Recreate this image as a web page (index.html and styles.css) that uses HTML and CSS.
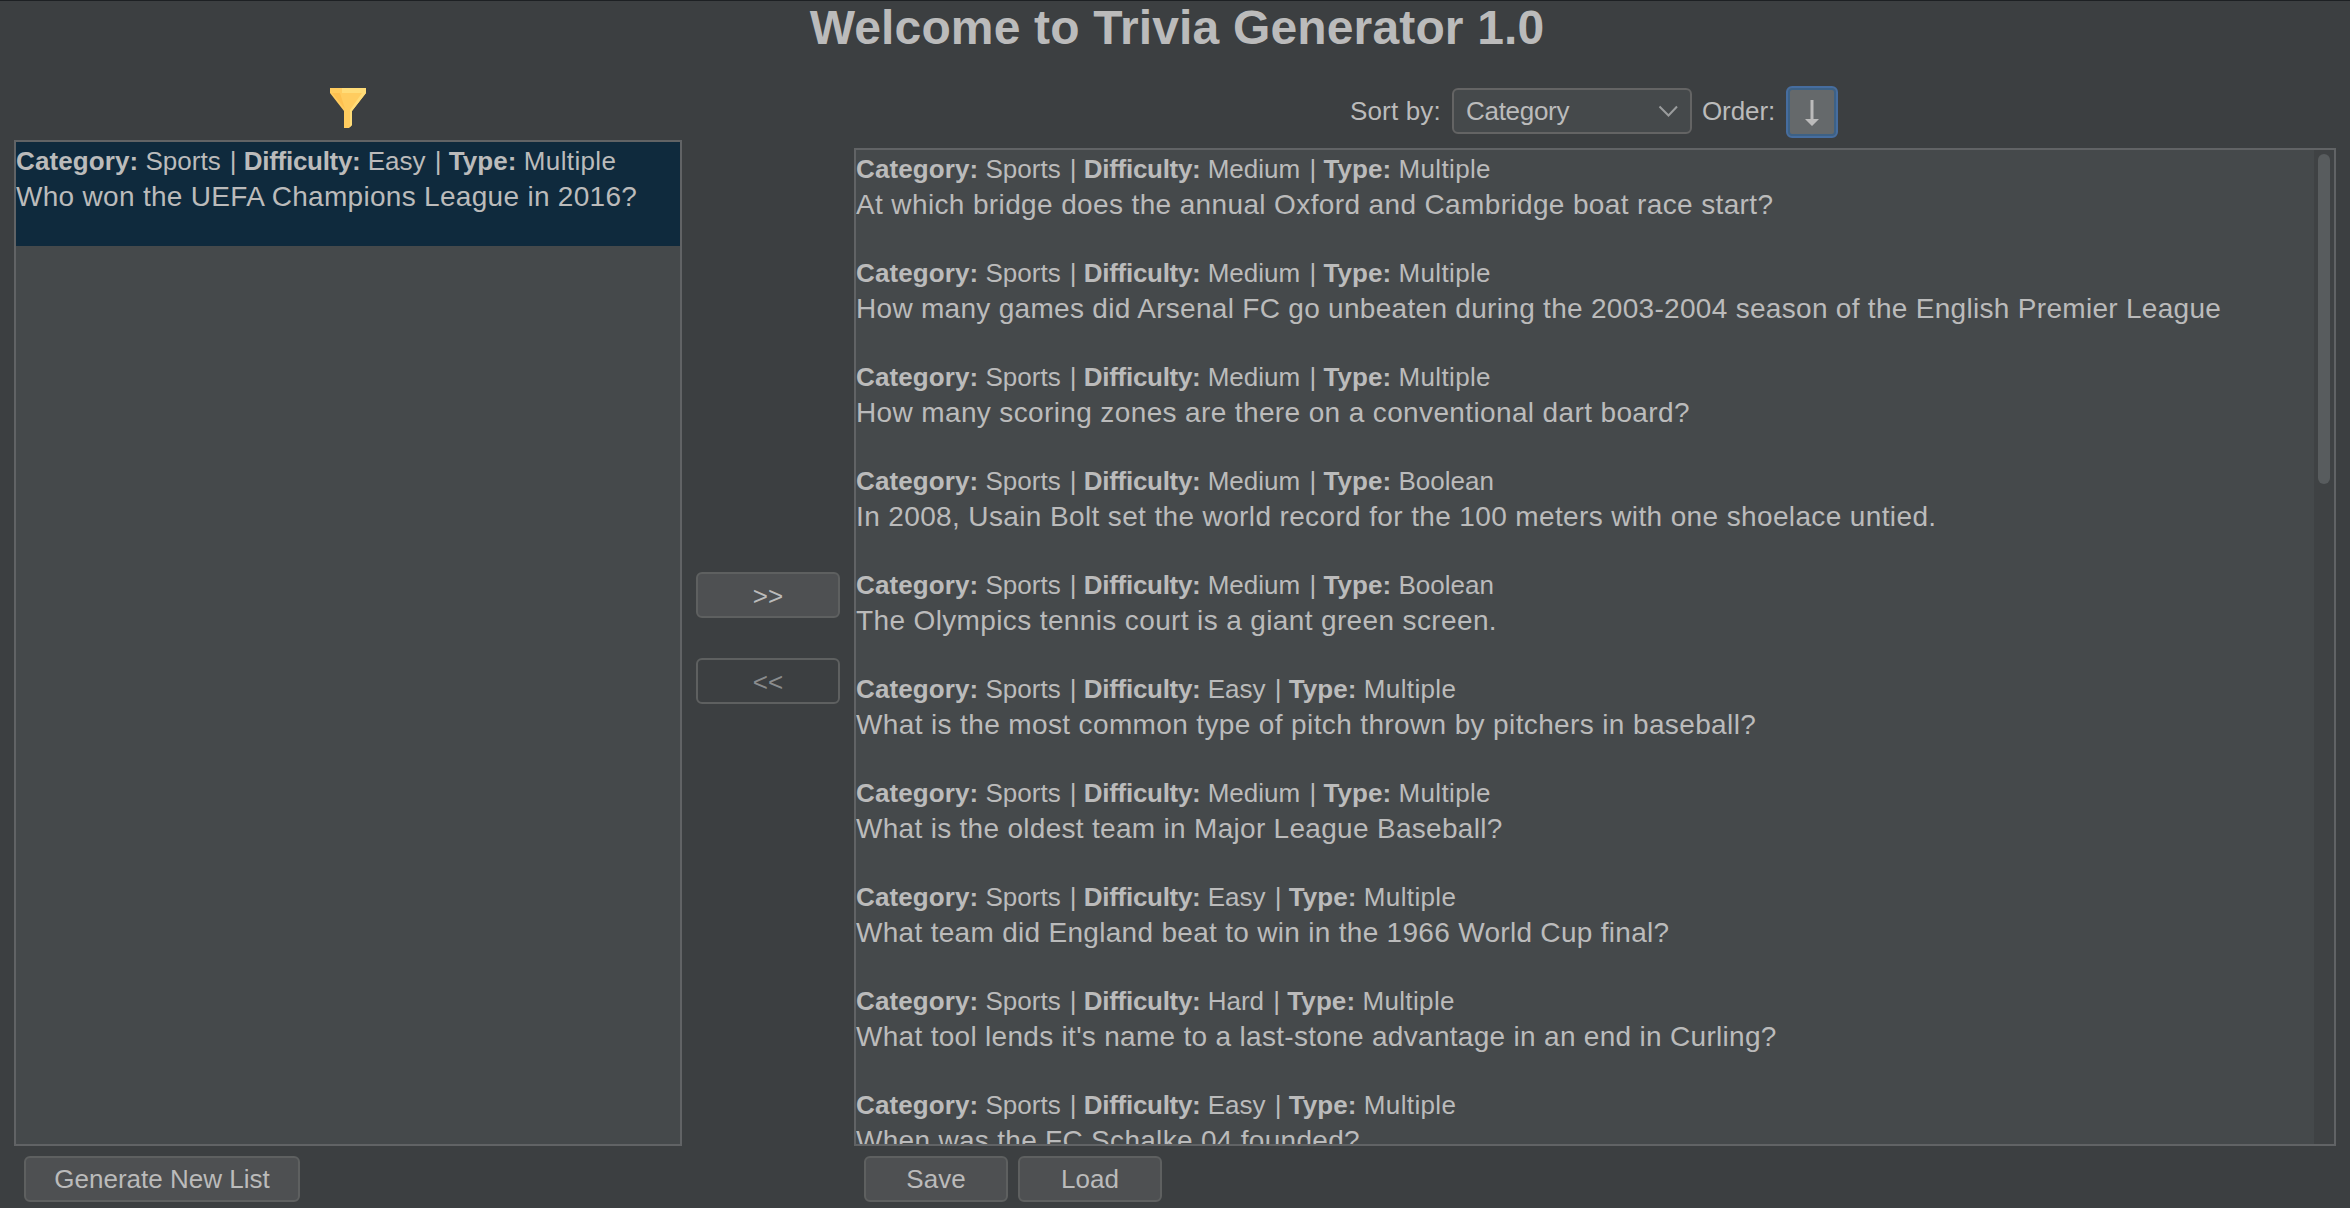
FILE: index.html
```html
<!DOCTYPE html>
<html lang="en">
<head>
<meta charset="utf-8">
<title>Trivia Generator</title>
<link rel="stylesheet" href="styles.css">
</head>
<body>
<h1 class="title">Welcome to Trivia Generator 1.0</h1>
<main class="main">
  <section class="column column-left">
    <div class="filter">
      <svg width="36" height="40" viewBox="0 0 36 40">
        <path fill="#ffcc5f" d="M0 0H36V5L22 23V37L19 40H14V23L0 5Z"/>
        <path fill="#ffdc78" d="M12 0H36V5L22 23V37L20 39V22L32 5H12Z"/>
        <path fill="#fdc050" d="M2 5H10L15 21Z"/>
      </svg>
    </div>
    <ul class="list list-left">
      <li class="item selected"><p class="meta"><b>Category:</b> Sports <span class="bar">|</span> <b class="diff">Difficulty:</b> Easy <span class="bar">|</span> <b>Type:</b> <span class="multiple">Multiple</span></p><p class="question">Who won the UEFA Champions League in 2016?</p></li>
    </ul>
    <div class="actions"><button class="button generate">Generate New List</button></div>
  </section>
  <div class="transfer">
    <button class="button">&gt;&gt;</button>
    <button class="button disabled">&lt;&lt;</button>
  </div>
  <section class="column column-right">
    <div class="sort">
      <span class="sort-label">Sort by:</span>
      <div class="combo"><span>Category</span>
        <svg width="20" height="12" viewBox="0 0 20 12"><path d="M1.5 1.5L10.5 10.5L19 1.5" fill="none" stroke="#9a9c9d" stroke-width="2"/></svg>
      </div>
      <span class="order-label">Order:</span>
      <button class="order"><svg width="14" height="26" viewBox="0 0 14 26"><path fill="#bbb" d="M5.5 0H8.5V19H14L7 26L0 19H5.5Z"/></svg></button>
    </div>
    <div class="list list-right">
      <ul class="items">
        <li class="item"><p class="meta"><b>Category:</b> Sports <span class="bar">|</span> <b class="diff">Difficulty:</b> Medium <span class="bar">|</span> <b>Type:</b> <span class="multiple">Multiple</span></p><p class="question wide">At which bridge does the annual Oxford and Cambridge boat race start?</p></li>
        <li class="item"><p class="meta"><b>Category:</b> Sports <span class="bar">|</span> <b class="diff">Difficulty:</b> Medium <span class="bar">|</span> <b>Type:</b> <span class="multiple">Multiple</span></p><p class="question">How many games did Arsenal FC go unbeaten during the 2003-2004 season of the English Premier League</p></li>
        <li class="item"><p class="meta"><b>Category:</b> Sports <span class="bar">|</span> <b class="diff">Difficulty:</b> Medium <span class="bar">|</span> <b>Type:</b> <span class="multiple">Multiple</span></p><p class="question wide">How many scoring zones are there on a conventional dart board?</p></li>
        <li class="item"><p class="meta"><b>Category:</b> Sports <span class="bar">|</span> <b class="diff">Difficulty:</b> Medium <span class="bar">|</span> <b>Type:</b> Boolean</p><p class="question wide">In 2008, Usain Bolt set the world record for the 100 meters with one shoelace untied.</p></li>
        <li class="item"><p class="meta"><b>Category:</b> Sports <span class="bar">|</span> <b class="diff">Difficulty:</b> Medium <span class="bar">|</span> <b>Type:</b> Boolean</p><p class="question wide">The Olympics tennis court is a giant green screen.</p></li>
        <li class="item"><p class="meta"><b>Category:</b> Sports <span class="bar">|</span> <b class="diff">Difficulty:</b> Easy <span class="bar">|</span> <b>Type:</b> <span class="multiple">Multiple</span></p><p class="question wide">What is the most common type of pitch thrown by pitchers in baseball?</p></li>
        <li class="item"><p class="meta"><b>Category:</b> Sports <span class="bar">|</span> <b class="diff">Difficulty:</b> Medium <span class="bar">|</span> <b>Type:</b> <span class="multiple">Multiple</span></p><p class="question">What is the oldest team in Major League Baseball?</p></li>
        <li class="item"><p class="meta"><b>Category:</b> Sports <span class="bar">|</span> <b class="diff">Difficulty:</b> Easy <span class="bar">|</span> <b>Type:</b> <span class="multiple">Multiple</span></p><p class="question">What team did England beat to win in the 1966 World Cup final?</p></li>
        <li class="item"><p class="meta"><b>Category:</b> Sports <span class="bar">|</span> <b class="diff">Difficulty:</b> Hard <span class="bar">|</span> <b>Type:</b> <span class="multiple">Multiple</span></p><p class="question">What tool lends it's name to a last-stone advantage in an end in Curling?</p></li>
        <li class="item"><p class="meta"><b>Category:</b> Sports <span class="bar">|</span> <b class="diff">Difficulty:</b> Easy <span class="bar">|</span> <b>Type:</b> <span class="multiple">Multiple</span></p><p class="question">When was the FC Schalke 04 founded?</p></li>
      </ul>
      <div class="scrollbar"><div class="thumb"></div></div>
    </div>
    <div class="actions"><button class="button">Save</button><button class="button">Load</button></div>
  </section>
</main>
</body>
</html>
```
FILE: styles.css
```css
* { box-sizing: border-box; margin: 0; padding: 0; }
body {
  width: 2350px; height: 1208px; overflow: hidden;
  display: flex; flex-direction: column;
  background: #3c3f41; color: #bbb;
  border-top: 1px solid #1d2023;
  font: 26px "Liberation Sans", Arial, sans-serif;
}
.title { height: 65px; font-size: 48px; line-height: 54px; padding-left: 4px; text-align: center; letter-spacing: 0.15px; }
.main { display: flex; flex: 1; min-height: 0; padding: 0 14px; }
.column { display: flex; flex-direction: column; }
.column-left { width: 668px; }
.column-right { width: 1482px; }
.filter { height: 74px; padding-top: 22px; display: flex; justify-content: center; flex-shrink: 0; }
.filter svg { display: block; }
.list { list-style: none; border: 2px solid #616365; background: #45494b; overflow: hidden; flex-shrink: 0; }
.list-left { height: 1006px; }
.list-right { height: 998px; display: flex; }
.items { list-style: none; flex: 1; }
.item { height: 104px; padding-top: 1px; white-space: nowrap; }
.selected { background: #0f2a3d; }
.meta { line-height: 36px; }
.meta b { letter-spacing: 0.1px; }
.meta .diff { letter-spacing: -0.3px; }
.bar { margin: 0 0 0 2px; }
.multiple { letter-spacing: 0.35px; }
.question { font-size: 28px; line-height: 36px; letter-spacing: 0.3px; }
.wide { letter-spacing: 0.37px; }
.scrollbar { width: 20px; background: #3f4244; padding: 4px; }
.thumb { height: 330px; border-radius: 6px; background: #585c5e; }
.actions { display: flex; gap: 10px; padding: 10px; flex-shrink: 0; }
.button {
  width: 144px; height: 46px; border: 2px solid #5e6060; border-radius: 6px; padding-top: 1px;
  background: #4e5052; color: #bbb; font: inherit; line-height: 41px;
}
.generate { width: 276px; }
.disabled { background: transparent; color: #8a8c8d; }
.transfer { width: 172px; padding: 506px 14px 0; display: flex; flex-direction: column; gap: 40px; }
.transfer .button { padding-top: 2px; }
.sort { height: 82px; padding: 20px 0 0 496px; display: flex; align-items: flex-start; flex-shrink: 0; }
.sort-label { width: 102px; line-height: 51px; letter-spacing: 0.15px; }
.combo {
  width: 240px; height: 46px; margin-top: 2px; padding: 0 12px; border: 2px solid #646464; border-radius: 6px;
  background: #45494b; display: flex; align-items: center; justify-content: space-between; letter-spacing: -0.3px;
}
.order-label { width: 94px; padding-left: 10px; line-height: 51px; letter-spacing: -0.1px; }
.order {
  width: 52px; height: 52px; padding-top: 2px; border: 2px solid #466d9f; border-radius: 6px;
  background: #65696b; box-shadow: inset 0 0 0 2px #3d6185; display: flex; align-items: center; justify-content: center;
}
```
